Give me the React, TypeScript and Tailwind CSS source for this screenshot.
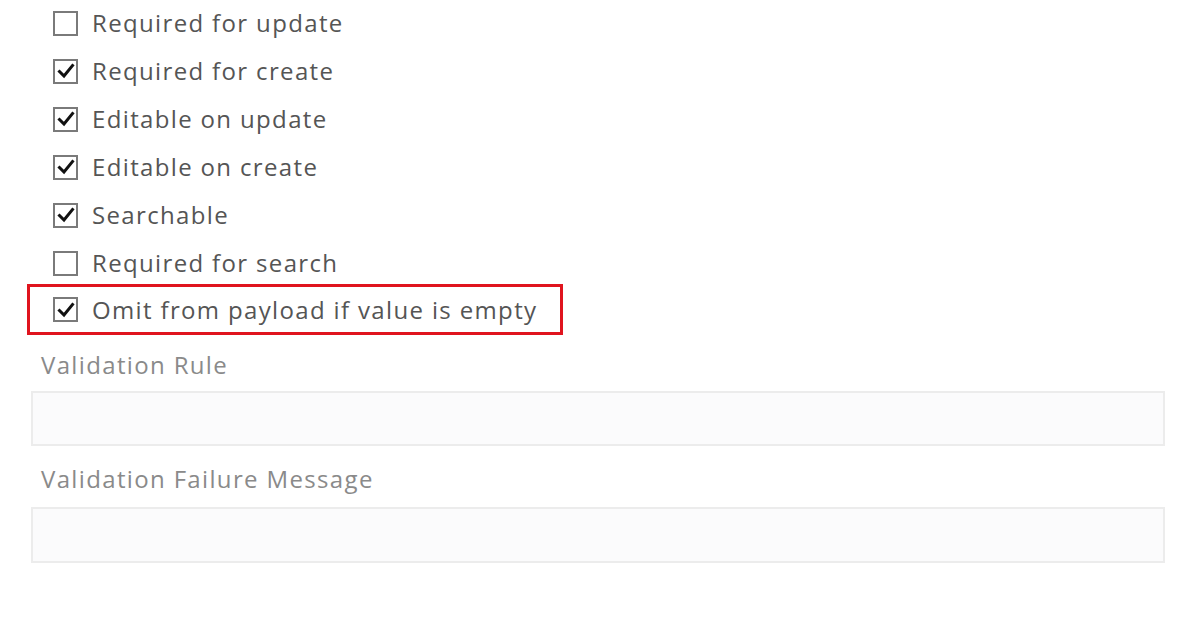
const items = [
  { label: "Required for update", checked: false },
  { label: "Required for create", checked: true },
  { label: "Editable on update", checked: true },
  { label: "Editable on create", checked: true },
  { label: "Searchable", checked: true },
  { label: "Required for search", checked: false },
];

const Box = ({ checked }: { checked: boolean }) => (
  <span className="flex h-[25px] w-[25px] shrink-0 items-center justify-center border-2 border-[#7a7a7a] bg-white">
    {checked && (
      <svg viewBox="0 0 20 20" className="h-[20px] w-[20px]">
        <path d="M3.5 10.5 L8 15 L16.5 4.5" fill="none" stroke="#111" strokeWidth="3" strokeLinecap="square" />
      </svg>
    )}
  </span>
);

export default function App() {
  return (
    <div className="h-[628px] w-[1196px] bg-white font-['Open_Sans',sans-serif] tracking-[1.35px]">
      <div className="-mt-px flex flex-col pl-[53px]">
        {items.map((it) => (
          <div key={it.label} className="flex h-[48px] items-center gap-[14px]">
            <Box checked={it.checked} />
            <span className="text-[24px] text-[#555]">{it.label}</span>
          </div>
        ))}
      </div>
      <div className="-mt-[3px] ml-[27px] flex h-[51px] w-[536px] items-center gap-[14px] border-[3px] border-[#e0141e] pl-[23px]">
        <Box checked />
        <span className="text-[24px] text-[#555]">Omit from payload if value is empty</span>
      </div>
      <div className="pl-[31px] pr-[31px]">
        <div className="mt-[13px] pl-[10px] text-[24px] leading-[34px] text-[#8a8a8a]">Validation Rule</div>
        <div className="mt-[9px] h-[55px] border-2 border-[#ececec] bg-[#fbfbfc]" />
        <div className="mt-[16px] pl-[10px] text-[24px] leading-[34px] text-[#8a8a8a]">Validation Failure Message</div>
        <div className="mt-[11px] h-[56px] border-2 border-[#ececec] bg-[#fbfbfc]" />
      </div>
    </div>
  );
}
